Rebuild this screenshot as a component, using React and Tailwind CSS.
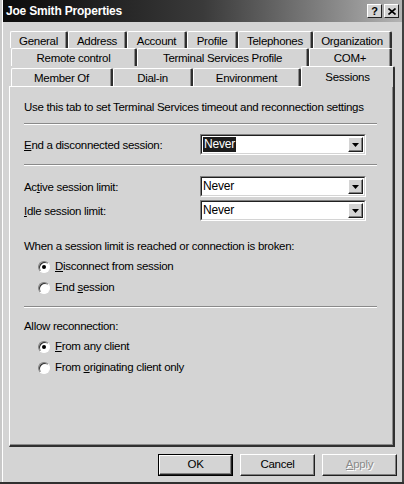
import React from 'react';

const row1 = [
  { label: 'General', w: 'w-[58px]' },
  { label: 'Address', w: 'w-[59px]' },
  { label: 'Account', w: 'w-[60px]' },
  { label: 'Profile', w: 'w-[51px]' },
  { label: 'Telephones', w: 'w-[75px]' },
  { label: 'Organization', w: 'w-[79px]' },
];

const row2 = [
  { label: 'Remote control', w: 'w-[126px]' },
  { label: 'Terminal Services Profile', w: 'w-[172px]' },
  { label: 'COM+', w: 'w-[83px]' },
];

const row3 = [
  { label: 'Member Of', w: 'w-[102px]' },
  { label: 'Dial-in', w: 'w-[80px]' },
  { label: 'Environment', w: 'w-[108px]' },
];

// texte de base : un peu plus haut, un peu plus serré
const txt = 'text-[11.5px] tracking-[-0.3px] text-black';

const Tab = ({ label, w, h = 'h-[17px]' }) => (
  <div
    className={`${w} ${h} flex items-center justify-center rounded-tl-[2px] rounded-tr-[2px] border-l border-t border-l-white border-t-white border-r-2 border-r-[#303030] pt-[3px] shadow-[inset_-1px_0_0_#8a8a8a] leading-none ${txt}`}
  >
    {label}
  </div>
);

const Separator = () => (
  <div className="w-[353px] border-t border-t-[#8a8a8a] border-b border-b-white" />
);

const Dropdown = ({ selected }) => (
  <div className="flex h-[21px] w-[166px] border border-t-[#808080] border-l-[#808080] border-r-white border-b-white">
    <div className="flex flex-1 items-stretch border border-t-[#202020] border-l-[#202020] border-r-[#d4d4d4] border-b-[#d4d4d4] bg-white">
      <div className="flex flex-1 items-center pl-[1px]">
        <span
          className={
            selected
              ? 'bg-[#1c1c1c] px-[1px] text-[12px] leading-[15px] tracking-[-0.2px] text-white'
              : 'text-[12px] leading-[15px] tracking-[-0.2px] text-black'
          }
        >
          Never
        </span>
      </div>
      <div className="m-[1px] flex w-[15px] items-center justify-center border border-t-white border-l-white border-r-[#202020] border-b-[#202020] bg-[#d4d4d4] shadow-[inset_-1px_-1px_0_#808080]">
        <svg width="7" height="4" viewBox="0 0 7 4">
          <path d="M0 0h7L3.5 4z" fill="#000" />
        </svg>
      </div>
    </div>
  </div>
);

const Radio = ({ checked, children }) => (
  <div className="flex h-[21px] items-center pl-[14px]">
    <div className="flex h-[12px] w-[12px] items-center justify-center rounded-full border border-t-[#808080] border-l-[#808080] border-r-white border-b-white bg-white shadow-[inset_1px_1px_0_#303030]">
      {checked && <div className="h-[4px] w-[4px] rounded-full bg-black" />}
    </div>
    <span className={`ml-[5px] ${txt}`}>{children}</span>
  </div>
);

const Button = ({ children, isDefault, disabled }) => (
  <div
    className={
      isDefault
        ? 'flex h-[22px] w-[75px] items-center justify-center border border-black'
        : 'flex h-[22px] w-[75px] items-center justify-center'
    }
  >
    <div className="flex h-full w-full items-center justify-center border border-t-white border-l-white border-r-[#202020] border-b-[#202020] shadow-[inset_-1px_-1px_0_#808080] text-[11.5px] tracking-[-0.3px]">
      {disabled ? (
        <span className="text-[#8a8a8a] [text-shadow:1px_1px_0_#fff]">{children}</span>
      ) : (
        <span className="text-black">{children}</span>
      )}
    </div>
  </div>
);

export default function App() {
  return (
    <div className="h-[484px] w-[404px] overflow-hidden bg-[#d4d4d4] font-['Liberation_Sans',Arial,sans-serif]">
      <div className="flex h-[482px] flex-col border-l-[2px] border-r-[2px] border-l-[#c8c8c8] border-r-[#404040]">
        <div className="flex h-[22px] items-center justify-between border-l border-l-white bg-gradient-to-r from-[#0c0c0c] via-[#3a3a3a] to-[#b4b4b4] pl-[3px] pr-[3px]">
          <span className="text-[12px] font-bold tracking-[-0.2px] text-white">Joe Smith Properties</span>
          <div className="flex gap-[2px]">
            <div className="flex h-[14px] w-[15px] items-center justify-center border border-t-white border-l-white border-r-[#202020] border-b-[#202020] bg-[#d4d4d4] text-[11px] font-bold leading-none text-black">
              ?
            </div>
            <div className="flex h-[14px] w-[15px] items-center justify-center border border-t-white border-l-white border-r-[#202020] border-b-[#202020] bg-[#d4d4d4]">
              <svg width="8" height="7" viewBox="0 0 8 7">
                <path d="M0.5 0.5L7.5 6.5M7.5 0.5L0.5 6.5" stroke="#000" strokeWidth="1.6" />
              </svg>
            </div>
          </div>
        </div>

        <div className="flex flex-1 flex-col border-l border-l-white">
          <div className="mt-[9px] flex pl-[7px]">
            {row1.map((t) => (
              <Tab key={t.label} {...t} />
            ))}
          </div>
          <div className="flex pl-[8px]">
            {row2.map((t) => (
              <Tab key={t.label} {...t} h="h-[18px]" />
            ))}
          </div>
          <div className="relative z-10 flex items-end pl-[8px]">
            {row3.map((t) => (
              <Tab key={t.label} {...t} h="h-[18px]" />
            ))}
            <div className={`-mb-[1px] flex h-[21px] w-[94px] items-start justify-center rounded-tl-[2px] rounded-tr-[2px] border-l border-t border-l-white border-t-white border-r-2 border-r-[#303030] bg-[#d4d4d4] pt-[5px] leading-none ${txt}`}>
              Sessions
            </div>
          </div>

          <div className="ml-[6px] flex h-[361px] w-[386px] flex-col border-l border-t border-l-white border-t-white border-r-2 border-b-2 border-r-[#303030] border-b-[#303030] pl-[14px] pt-[13px] shadow-[inset_-1px_-1px_0_#8a8a8a]">
            <div className={`h-[14px] leading-[14px] ${txt}`}>
              Use this tab to set Terminal Services timeout and reconnection settings
            </div>
            <div className="mt-[9px]">
              <Separator />
            </div>
            <div className="mt-[9px] flex items-center">
              <span className={`w-[176px] pt-[3px] ${txt}`}>
                <span className="underline">E</span>nd a disconnected session:
              </span>
              <Dropdown selected />
            </div>
            <div className="mt-[9px]">
              <Separator />
            </div>
            <div className="mt-[10px] flex items-center">
              <span className={`w-[176px] pt-[3px] ${txt}`}>
                Ac<span className="underline">t</span>ive session limit:
              </span>
              <Dropdown />
            </div>
            <div className="mt-[3px] flex items-center">
              <span className={`w-[176px] pt-[3px] ${txt}`}>
                <span className="underline">I</span>dle session limit:
              </span>
              <Dropdown />
            </div>
            <div className={`mt-[18px] h-[14px] leading-[14px] ${txt}`}>
              When a session limit is reached or connection is broken:
            </div>
            <div className="mt-[3px]">
              <Radio checked>
                <span className="underline">D</span>isconnect from session
              </Radio>
              <Radio>
                End <span className="underline">s</span>ession
              </Radio>
            </div>
            <div className="mt-[8px]">
              <Separator />
            </div>
            <div className={`mt-[11px] h-[14px] leading-[14px] ${txt}`}>
              Allow reconnection:
            </div>
            <div className="mt-[3px]">
              <Radio checked>
                <span className="underline">F</span>rom any client
              </Radio>
              <Radio>
                From <span className="underline">o</span>riginating client only
              </Radio>
            </div>
          </div>

          <div className="mt-[7px] flex w-[395px] justify-end gap-[7px] pr-[1px]">
            <Button isDefault>OK</Button>
            <Button>Cancel</Button>
            <Button disabled>
              <span className="underline">A</span>pply
            </Button>
          </div>
        </div>
      </div>
      <div className="h-[2px] bg-[#303030]" />
    </div>
  );
}
